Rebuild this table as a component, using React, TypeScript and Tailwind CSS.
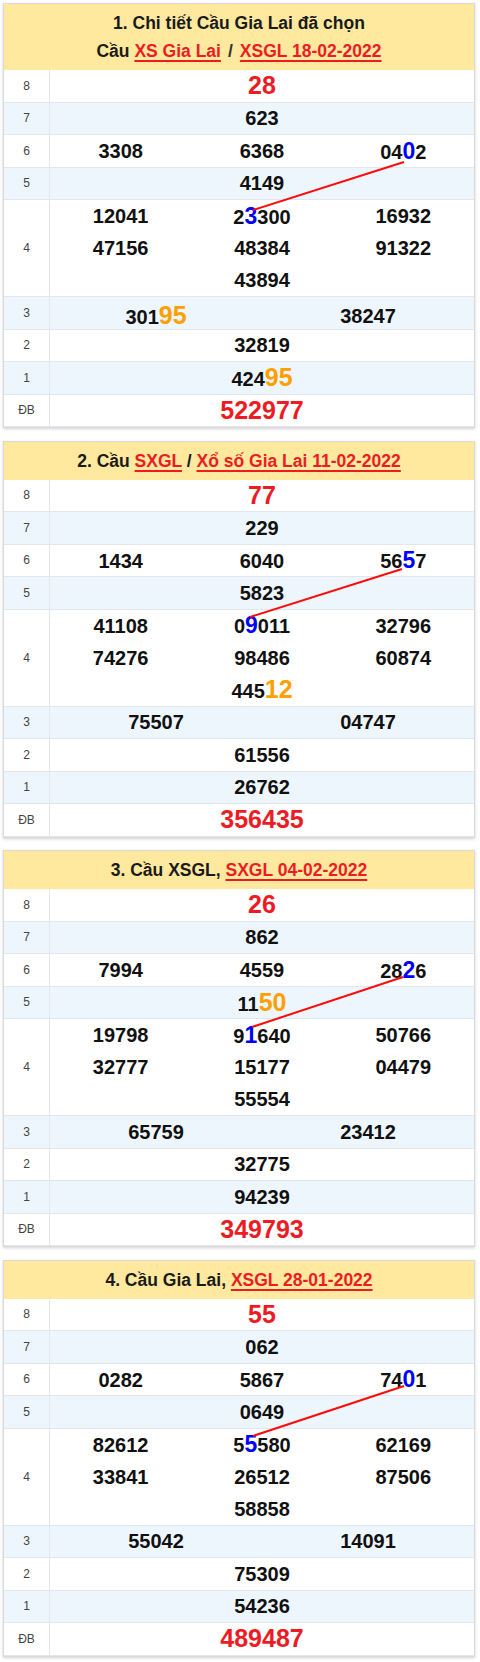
import React from "react";

type Row = { label: string; nums: string[]; cols?: number };

type Cau = {
  title: React.ReactNode;
  rows: Row[];
  line: [number, number, number, number];
};

const link = "text-[#ed1c24] underline underline-offset-[3px] decoration-[1.5px]";

const data: Cau[] = [
  {
    title: (
      <>
        <div>1. Chi tiết Cầu Gia Lai đã chọn</div>
        <div>
          Cầu <span className={link}>XS Gia Lai</span>
          <span className="px-[7px] text-[#333]">/</span>
          <span className={link}>XSGL 18-02-2022</span>
        </div>
      </>
    ),
    line: [249, 140, 400, 92],
    rows: [
      { label: "8", nums: ["28"] },
      { label: "7", nums: ["623"] },
      { label: "6", nums: ["3308", "6368", "04{0}2"], cols: 3 },
      { label: "5", nums: ["4149"] },
      { label: "4", nums: ["12041", "2{3}300", "16932", "47156", "48384", "91322", "43894"], cols: 3 },
      { label: "3", nums: ["301[95]", "38247"], cols: 2 },
      { label: "2", nums: ["32819"] },
      { label: "1", nums: ["424[95]"] },
      { label: "ĐB", nums: ["522977"] },
    ],
  },
  {
    title: (
      <div>
        2. Cầu <span className={link}>SXGL</span> / <span className={link}>Xổ số Gia Lai 11-02-2022</span>
      </div>
    ),
    line: [246, 137, 398, 89],
    rows: [
      { label: "8", nums: ["77"] },
      { label: "7", nums: ["229"] },
      { label: "6", nums: ["1434", "6040", "56{5}7"], cols: 3 },
      { label: "5", nums: ["5823"] },
      { label: "4", nums: ["41108", "0{9}011", "32796", "74276", "98486", "60874", "445[12]"], cols: 3 },
      { label: "3", nums: ["75507", "04747"], cols: 2 },
      { label: "2", nums: ["61556"] },
      { label: "1", nums: ["26762"] },
      { label: "ĐB", nums: ["356435"] },
    ],
  },
  {
    title: (
      <div>
        3. Cầu XSGL, <span className={link}>SXGL 04-02-2022</span>
      </div>
    ),
    line: [248, 138, 399, 88],
    rows: [
      { label: "8", nums: ["26"] },
      { label: "7", nums: ["862"] },
      { label: "6", nums: ["7994", "4559", "28{2}6"], cols: 3 },
      { label: "5", nums: ["11[50]"] },
      { label: "4", nums: ["19798", "9{1}640", "50766", "32777", "15177", "04479", "55554"], cols: 3 },
      { label: "3", nums: ["65759", "23412"], cols: 2 },
      { label: "2", nums: ["32775"] },
      { label: "1", nums: ["94239"] },
      { label: "ĐB", nums: ["349793"] },
    ],
  },
  {
    title: (
      <div>
        4. Cầu Gia Lai, <span className={link}>XSGL 28-01-2022</span>
      </div>
    ),
    line: [249, 137, 400, 87],
    rows: [
      { label: "8", nums: ["55"] },
      { label: "7", nums: ["062"] },
      { label: "6", nums: ["0282", "5867", "74{0}1"], cols: 3 },
      { label: "5", nums: ["0649"] },
      { label: "4", nums: ["82612", "5{5}580", "62169", "33841", "26512", "87506", "58858"], cols: 3 },
      { label: "3", nums: ["55042", "14091"], cols: 2 },
      { label: "2", nums: ["75309"] },
      { label: "1", nums: ["54236"] },
      { label: "ĐB", nums: ["489487"] },
    ],
  },
];

// "{d}" = blue cau digit, "[dd]" = orange loto pair
function Num({ v, big }: { v: string; big?: boolean }) {
  const parts = v.split(/(\{\d+\}|\[\d+\])/).filter(Boolean);
  return (
    <span className={big ? "text-[25px] text-[#ed1c24]" : "text-[20px] text-[#111]"}>
      {parts.map((p, i) =>
        p.startsWith("{") ? (
          <span key={i} className="text-[23px] text-[#0000ff]">{p.slice(1, -1)}</span>
        ) : p.startsWith("[") ? (
          <span key={i} className="text-[25px] text-[#ff9f00]">{p.slice(1, -1)}</span>
        ) : (
          <React.Fragment key={i}>{p}</React.Fragment>
        )
      )}
    </span>
  );
}

function PrizeRow({ row, odd }: { row: Row; odd: boolean }) {
  const big = row.label === "8" || row.label === "ĐB";
  const tall = row.nums.length > 3;
  return (
    <div
      className={`flex border-b border-[#e2e7ed] last:border-b-0 ${odd ? "bg-[#eef6fd]" : "bg-white"} ${
        tall ? "h-[97px]" : "h-[32.5px]"
      }`}
    >
      <div className="w-[46px] shrink-0 border-r border-[#e2e7ed] flex items-center justify-center text-[12px] text-[#444]">
        {row.label}
      </div>
      <div className="flex-1">
        {row.cols === 3 ? (
          <div className="grid grid-cols-3">
            {row.nums.map((n, i) => (
              <div
                key={i}
                className={`h-[32px] flex items-center justify-center font-bold ${
                  i === 6 ? "col-span-3" : ""
                }`}
              >
                <Num v={n} />
              </div>
            ))}
          </div>
        ) : row.cols === 2 ? (
          <div className="grid grid-cols-2 h-full">
            {row.nums.map((n, i) => (
              <div key={i} className="flex items-center justify-center font-bold">
                <Num v={n} />
              </div>
            ))}
          </div>
        ) : (
          <div className="h-full flex items-center justify-center font-bold">
            <Num v={row.nums[0]} big={big} />
          </div>
        )}
      </div>
    </div>
  );
}

function CauCard({ c }: { c: Cau }) {
  const [x1, y1, x2, y2] = c.line;
  return (
    <div className="ml-[3px] w-[472px] border border-[#dadada] shadow-[0_1px_3px_rgba(0,0,0,0.18)] bg-white">
      <div className="bg-[#fee99f] py-[5px] leading-[28px] text-center text-[17.5px] font-bold text-[#1a1a1a]">
        {c.title}
      </div>
      <div className="relative">
        {c.rows.map((r, i) => (
          <PrizeRow key={r.label} row={r} odd={i % 2 === 1} />
        ))}
        <svg className="absolute inset-0 pointer-events-none" width="470" height="358">
          <line x1={x1} y1={y1} x2={x2} y2={y2} stroke="#ff0a0a" strokeWidth="2" />
        </svg>
      </div>
    </div>
  );
}

export default function App() {
  return (
    <div className="w-[480px] min-h-[1662px] bg-white pt-[3px] flex flex-col gap-[12.5px] font-['Liberation_Sans',Arial,sans-serif]">
      {data.map((c, i) => (
        <CauCard key={i} c={c} />
      ))}
    </div>
  );
}
